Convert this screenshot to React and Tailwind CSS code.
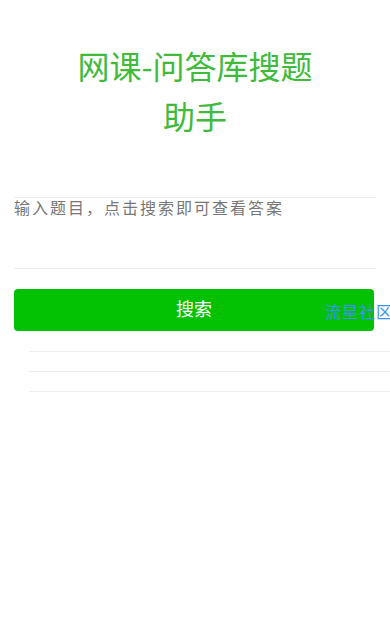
import React from "react";

export default function App() {
  return (
    <div
      className="relative w-[390px] h-[625px] bg-white overflow-hidden"
      style={{ fontFamily: '"Noto Sans CJK SC", "Noto Sans", sans-serif' }}
    >
      {/* title */}
      <div className="pt-[40px] flex justify-center">
        <h1 className="w-[240px] text-center text-[32px] leading-[50px] text-[#40ba3a]">
          网课-问答库搜题助手
        </h1>
      </div>

      {/* question box */}
      <div className="mx-[14px] mt-[57px] h-[72px] border-t border-b border-[#eeeeee]">
        <p className="text-[16px] leading-[18px] tracking-[2px] text-[#777777]">
          输入题目，点击搜索即可查看答案
        </p>
      </div>

      {/* search button */}
      <button className="mt-[20px] ml-[14px] w-[360px] h-[42px] pb-[3px] rounded-[4px] bg-[#02c002] text-white text-[18px] flex items-center justify-center">
        搜索
      </button>

      {/* empty result list */}
      <div className="ml-[29px] mt-[1px]">
        <div className="h-[20px] border-b border-[#eeeeee]" />
        <div className="h-[20px] border-b border-[#eeeeee]" />
        <div className="h-[20px] border-b border-[#eeeeee]" />
      </div>

      {/* floating link */}
      <div className="absolute left-[325px] top-[301px] whitespace-nowrap text-[16px] leading-[20px] tracking-[1px] text-[#3d94f0]">
        流星社区
      </div>
    </div>
  );
}
